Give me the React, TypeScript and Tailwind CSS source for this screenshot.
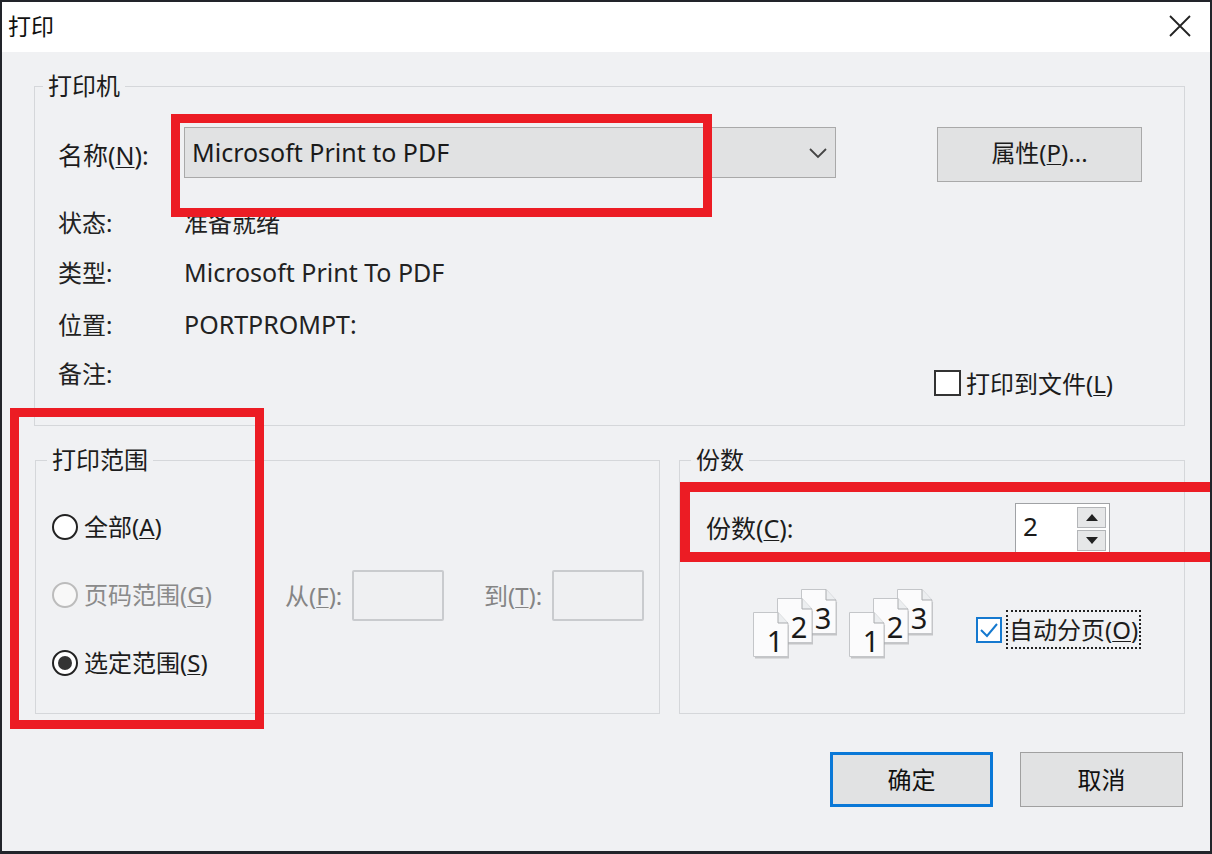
const cjk = "font-['Noto_Sans','Noto_Sans_CJK_SC',sans-serif]";

function U({ children }: { children: string }) {
  return <span className="underline underline-offset-2 decoration-1">{children}</span>;
}

function Legend({ children, className }: { children: React.ReactNode; className: string }) {
  return <span className={`absolute -top-[17px] bg-[#f0f1f3] px-[5px] text-[24px] leading-[32px] text-[#1c1c1c] ${className}`}>{children}</span>;
}

function Info({ label, value, h, size }: { label: string; value: string; h: string; size: string }) {
  return (
    <div className={`flex items-center ${h}`}>
      <span className="w-[149px] pl-[23px] text-[24px] text-[#222]">{label}</span>
      <span className={`${size} text-[#222]`}>{value}</span>
    </div>
  );
}

function Radio({ checked, disabled, children }: { checked?: boolean; disabled?: boolean; children: React.ReactNode }) {
  return (
    <div className={`flex items-center gap-[6px] text-[24px] leading-[28px] ${disabled ? "text-[#8a8a8a]" : "text-[#1c1c1c]"}`}>
      <span className={`flex h-[26px] w-[26px] items-center justify-center rounded-full border-2 ${disabled ? "border-[#bcbcbc] bg-[#f8f8f8]" : "border-[#222] bg-white"}`}>
        {checked && <span className="h-[14px] w-[14px] rounded-full bg-[#333]" />}
      </span>
      <span>{children}</span>
    </div>
  );
}

function Page({ x, y, n }: { x: number; y: number; n: string }) {
  return (
    <g transform={`translate(${x} ${y})`}>
      <path d="M1 1H25L35 12V45H1Z" fill="#000" opacity="0.18" transform="translate(1 1.5)" />
      <path d="M0.5 0.5H25L35 11V44.5H0.5Z" fill="#fbfbfc" stroke="#c4c6c9" />
      <path d="M25 0.5V11H35" fill="#eceef0" stroke="#a9abae" />
      <text x="22" y="40" textAnchor="middle" fontSize="29" fontFamily="'Noto Sans', sans-serif" fill="#1a1a1a">{n}</text>
    </g>
  );
}

function Pages() {
  return (
    <svg width="88" height="80" viewBox="0 0 88 80" className="shrink-0">
      <Page x={48} y={1} n="3" />
      <Page x={24} y={10} n="2" />
      <Page x={0} y={24} n="1" />
    </svg>
  );
}

export default function App() {
  return (
    <div className={`relative h-[854px] w-[1212px] overflow-hidden border-x-2 border-t-2 border-b-[3px] border-[#22242a] bg-[#f0f1f3] ${cjk}`}>
      <header className="flex h-[50px] items-center justify-between bg-white pb-[2px] pl-[6px] pr-[18px]">
        <span className="text-[23px] text-[#111]">打印</span>
        <svg width="24" height="24" viewBox="0 0 24 24" stroke="#222" strokeWidth="1.8" fill="none">
          <path d="M2 2L22 22M22 2L2 22" />
        </svg>
      </header>

      <main className="pl-[32px] pt-[34px]">
        <section className="relative h-[340px] w-[1151px] border border-[#d5d7da]">
          <Legend className="left-[8px]">打印机</Legend>

          <div className="flex pl-[23px] pt-[40px]">
            <span className="w-[126px] pt-[12px] text-[25px] leading-[32px] text-[#1c1c1c]">名称(<U>N</U>):</span>
            <div className="flex h-[51px] w-[652px] shrink-0 items-center justify-between border border-[#a9a9a9] bg-[#e1e2e3] pl-[7px] pr-[7px] text-[25px] text-[#1a1a1a]">
              <span>Microsoft Print to PDF</span>
              <svg width="20" height="12" viewBox="0 0 20 12" fill="none" stroke="#444" strokeWidth="1.8"><path d="M2 2L10 10L18 2" /></svg>
            </div>
            <button className="ml-[101px] h-[55px] w-[205px] shrink-0 border border-[#a9a9a9] bg-[#e1e2e3] pb-[3px] text-[24px] text-[#1c1c1c]">属性(<U>P</U>)...</button>
          </div>

          <div className="mt-[16px] flex flex-col">
            <Info label="状态:" value="准备就绪" h="h-[49px]" size="text-[24px]" />
            <Info label="类型:" value="Microsoft Print To PDF" h="h-[52px]" size="text-[25px]" />
            <Info label="位置:" value="PORTPROMPT:" h="h-[52px]" size="text-[25px]" />
            <div className="flex h-[46px] items-center justify-between pl-[23px] pr-[71px]">
              <span className="text-[24px] text-[#222]">备注:</span>
              <div className="flex items-center gap-[5px] pt-[17px] text-[24px] text-[#1c1c1c]">
                <span className="h-[26px] w-[27px] border-2 border-[#333] bg-white" />
                <span className="pt-[3px]">打印到文件(<U>L</U>)</span>
              </div>
            </div>
          </div>
        </section>

        <div className="ml-px mt-[34px] flex gap-[19px]">
          <section className="relative flex h-[254px] w-[625px] shrink-0 border border-[#d5d7da]">
            <Legend className="left-[11px]">打印范围</Legend>
            <div className="flex w-[240px] flex-col gap-[40px] pl-[16px] pt-[52px]">
              <Radio>全部(<U>A</U>)</Radio>
              <Radio disabled>页码范围(<U>G</U>)</Radio>
              <Radio checked>选定范围(<U>S</U>)</Radio>
            </div>
            <div className="flex h-fit items-center pt-[109px] text-[24px] text-[#858585]">
              <span className="w-[76px] pl-[9px]">从(<U>F</U>):</span>
              <span className="h-[51px] w-[92px] rounded-[2px] border-2 border-[#c9cbce] bg-[#eff0f2]" />
              <span className="w-[108px] pl-[40px]">到(<U>T</U>):</span>
              <span className="h-[51px] w-[92px] rounded-[2px] border-2 border-[#c9cbce] bg-[#eff0f2]" />
            </div>
          </section>

          <section className="relative h-[254px] w-[506px] shrink-0 border border-[#d5d7da]">
            <Legend className="left-[11px]">份数</Legend>
            <div className="flex items-center pl-[26px] pt-[42px]">
              <span className="w-[309px] text-[25px] text-[#1c1c1c]">份数(<U>C</U>):</span>
              <div className="flex h-[52px] w-[95px] items-start justify-between border border-[#a0a2a5] bg-white pl-[7px] pr-[3px] pt-[3px]">
                <span className="mt-[6px] text-[26px] leading-none text-[#1a1a1a]">2</span>
                <div className="flex flex-col gap-[2px]">
                  <span className="flex h-[21px] w-[29px] items-center justify-center border border-[#b3b5b8] bg-[#e6e7e8] text-[#222]">
                    <svg width="12" height="7" viewBox="0 0 12 7" fill="currentColor"><path d="M6 0L12 7H0Z" /></svg>
                  </span>
                  <span className="flex h-[21px] w-[29px] items-center justify-center border border-[#b3b5b8] bg-[#e6e7e8] text-[#222]">
                    <svg width="12" height="7" viewBox="0 0 12 7" fill="currentColor"><path d="M0 0H12L6 7Z" /></svg>
                  </span>
                </div>
              </div>
            </div>
            <div className="flex items-start pl-[73px] pt-[33px]">
              <div className="flex gap-[8px]">
                <Pages />
                <Pages />
              </div>
              <div className="ml-[39px] mt-[22px] flex items-center gap-[4px]">
                <span className="flex h-[26px] w-[26px] items-center justify-center border-2 border-[#1579cf] bg-white">
                  <svg width="20" height="18" viewBox="0 0 20 18" fill="none" stroke="#1579cf" strokeWidth="2"><path d="M2 9L8 15L18 3" /></svg>
                </span>
                <span className="border-2 border-dotted border-[#222] px-[1px] text-[24px] leading-[35px] text-[#1c1c1c]">自动分页(<U>O</U>)</span>
              </div>
            </div>
          </section>
        </div>

        <footer className="mt-[38px] flex justify-end gap-[27px] pr-[27px]">
          <button className="h-[55px] w-[163px] border-[3px] border-[#0a78d7] bg-[#e1e2e3] text-[24px] text-[#111]">确定</button>
          <button className="h-[55px] w-[163px] border border-[#a0a0a0] bg-[#e1e2e3] text-[24px] text-[#111]">取消</button>
        </footer>
      </main>

      <div className="absolute left-[169px] top-[112px] h-[103px] w-[541px] border-[9px] border-[#ec1c24]" />
      <div className="absolute left-[8px] top-[406px] h-[321px] w-[254px] border-[9px] border-[#ec1c24]" />
      <div className="absolute left-[678px] top-[480px] h-[80px] w-[560px] border-[10px] border-[#ec1c24]" />
    </div>
  );
}
